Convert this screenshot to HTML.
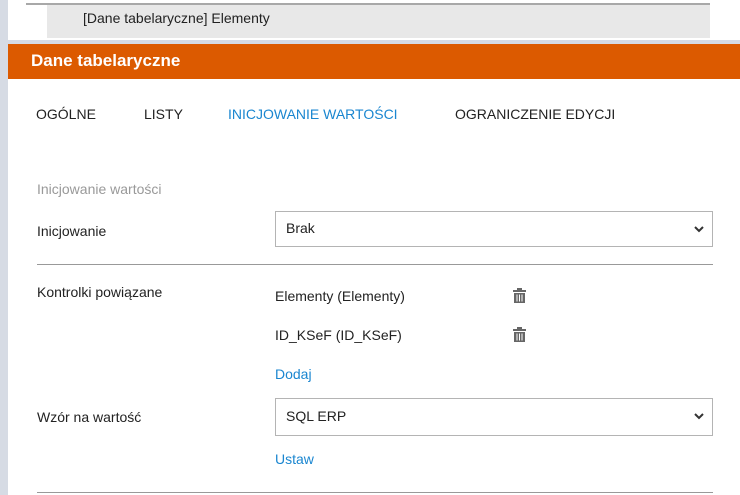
<!DOCTYPE html>
<html><head><meta charset="utf-8"><style>
body{margin:0;width:740px;height:495px;overflow:hidden;background:#fff;font-family:"Segoe UI","Liberation Sans",sans-serif;position:relative;font-size:14px;color:#222}
.a{position:absolute}
.sel{position:absolute;border:1px solid #b4b4b4;box-sizing:border-box;background:#fff}
.sel span{position:absolute;left:10px;top:8px;font-size:14px}
.sel svg{position:absolute;right:8px;top:14px}
.blue{color:#1a86d0}
</style></head><body>
<div class="a" style="left:0;top:0;width:8px;height:495px;background:#d6dbe4"></div>
<div class="a" style="left:26px;top:3px;width:684px;height:2px;background:#a8a8a8"></div>
<div class="a" style="left:47px;top:5px;width:663px;height:33px;background:#e8e8e8"></div>
<div class="a" style="left:83px;top:10px;font-size:14px">[Dane tabelaryczne] Elementy</div>
<div class="a" style="left:8px;top:40px;width:732px;height:4px;background:#d6dbe4"></div>
<div class="a" style="left:8px;top:44px;width:732px;height:35px;background:#dc5a00"></div>
<div class="a" style="left:31px;top:51px;color:#fff;font-size:17px;font-weight:600">Dane tabelaryczne</div>
<div class="a" style="left:36px;top:106px">OGÓLNE</div>
<div class="a" style="left:144px;top:106px">LISTY</div>
<div class="a blue" style="left:228px;top:106px">INICJOWANIE WARTOŚCI</div>
<div class="a" style="left:455px;top:106px">OGRANICZENIE EDYCJI</div>
<div class="a" style="left:37px;top:181px;color:#999">Inicjowanie wartości</div>
<div class="a" style="left:37px;top:223px">Inicjowanie</div>
<div class="sel" style="left:275px;top:211px;width:438px;height:36px"><span>Brak</span><svg width="10" height="7" viewBox="0 0 10 7"><path d="M1 1l4 4 4-4" stroke="#333" stroke-width="2" fill="none"/></svg></div>
<div class="a" style="left:37px;top:264px;width:676px;height:1px;background:#999"></div>
<div class="a" style="left:37px;top:284px">Kontrolki powiązane</div>
<div class="a" style="left:275px;top:288px">Elementy (Elementy)</div>
<div class="a" style="left:275px;top:327px">ID_KSeF (ID_KSeF)</div>
<svg class="a" style="left:512px;top:288px" width="15" height="16" viewBox="0 0 15 16"><rect x="1" y="2" width="13" height="2" fill="#666"/><rect x="5" y="0" width="5" height="2" fill="#666"/><path d="M2 5h11v10H2z" fill="#666"/><path d="M5 6.5v7M7.5 6.5v7M10 6.5v7" stroke="#fff" stroke-width="1"/></svg>
<svg class="a" style="left:512px;top:327px" width="15" height="16" viewBox="0 0 15 16"><rect x="1" y="2" width="13" height="2" fill="#666"/><rect x="5" y="0" width="5" height="2" fill="#666"/><path d="M2 5h11v10H2z" fill="#666"/><path d="M5 6.5v7M7.5 6.5v7M10 6.5v7" stroke="#fff" stroke-width="1"/></svg>
<div class="a blue" style="left:275px;top:366px">Dodaj</div>
<div class="a" style="left:37px;top:409px">Wzór na wartość</div>
<div class="sel" style="left:275px;top:398px;width:438px;height:38px"><span style="top:9px">SQL ERP</span><svg width="10" height="7" viewBox="0 0 10 7"><path d="M1 1l4 4 4-4" stroke="#333" stroke-width="2" fill="none"/></svg></div>
<div class="a blue" style="left:275px;top:451px">Ustaw</div>
<div class="a" style="left:37px;top:492px;width:676px;height:1px;background:#999"></div>
</body></html>
